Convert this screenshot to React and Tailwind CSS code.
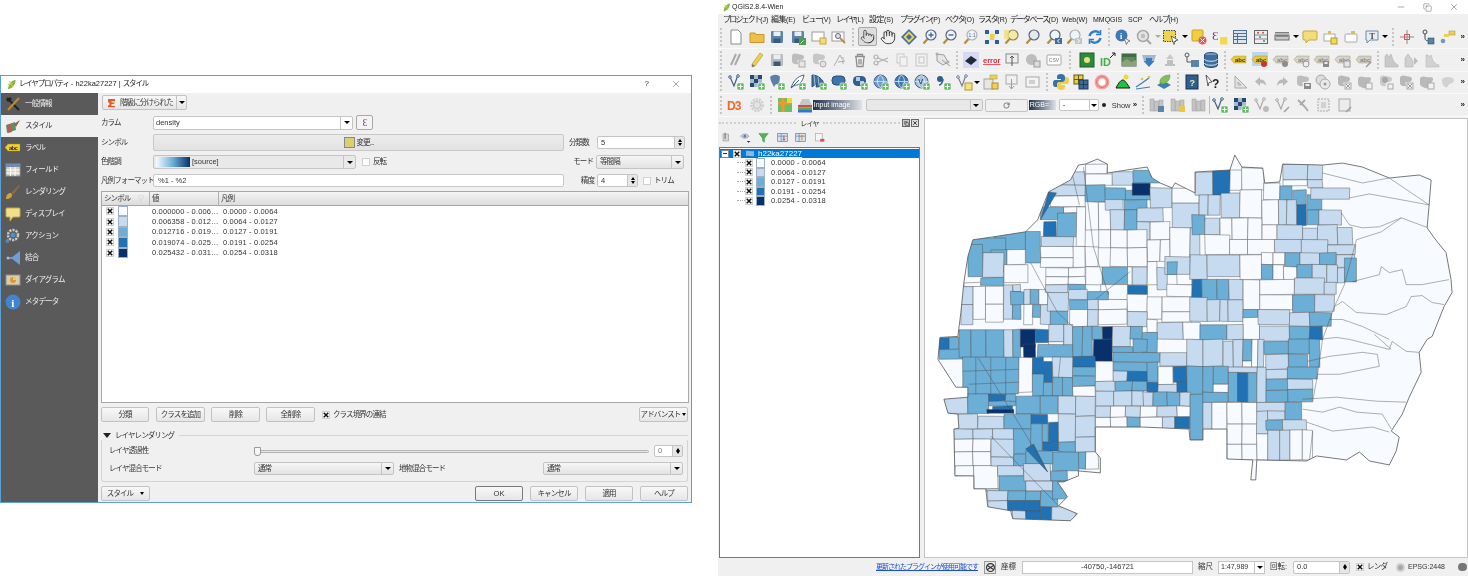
import { Hand, Minus, Copy, X, Pointer, RotateCw } from 'lucide-react';

const C = ['#f7fbff', '#c6dbef', '#6baed6', '#2171b5', '#08306b'];

// map outline, page coordinates
const OUTLINE = '1085,164 1097,159 1107,164 1107,173 1133,169 1147,167 1152,178 1160,183 1172,188 1175,183 1195,193 1195,172 1230,170 1235,155 1242,167 1263,168 1265,183 1280,182 1283,164 1323,165 1343,163 1363,167 1390,178 1420,175 1432,180 1430,205 1428,228 1435,238 1447,253 1452,280 1453,293 1445,307 1433,337 1428,340 1420,353 1422,373 1410,398 1403,415 1392,432 1400,438 1397,452 1390,466 1370,462 1360,453 1347,461 1317,457 1307,462 1257,461 1256,481 1251,481 1253,461 1227,460 1227,430 1203,430 1203,441 1190,441 1189,430 1143,428 1095,428 1095,453 1100,459 1100,474 1078,472 1078,477 1063,483 1057,483 1067,498 1058,507 1077,515 1070,522 1012,520 1010,512 987,508 985,490 973,490 973,477 954,477 953,430 958,429 957,415 947,414 943,400 967,398 967,388 955,388 937,360 939,338 957,337 960,313 963,283 967,257 972,240 993,237 1025,232 1037,220 1048,192 1070,180 1078,165';

// cells: x0, y0, x1, y1, class
const CELLS = [
  [1050, 172, 1085, 185, 1], [1085, 164, 1107, 174, 0], [1085, 174, 1112, 185, 0], [1112, 172, 1133, 185, 1], [1133, 170, 1160, 183, 2],
  [1048, 185, 1085, 196, 1], [1050, 196, 1085, 207, 0], [1063, 207, 1080, 213, 0], [1085, 185, 1105, 202, 2], [1105, 188, 1125, 200, 2], [1125, 190, 1152, 200, 2], [1132, 183, 1150, 195, 4],
  [1085, 202, 1098, 230, 0], [1098, 202, 1110, 230, 0], [1105, 200, 1123, 210, 1], [1124, 200, 1147, 210, 2], [1110, 210, 1124, 230, 1], [1124, 210, 1137, 230, 2],
  [1137, 208, 1163, 222, 1], [1150, 188, 1172, 208, 1], [1172, 188, 1199, 203, 0], [1172, 203, 1199, 228, 1], [1137, 222, 1150, 240, 1], [1150, 222, 1170, 240, 0],
  [1098, 230, 1110, 248, 0], [1110, 230, 1127, 248, 0], [1127, 230, 1147, 248, 0], [1147, 240, 1160, 262, 0], [1160, 240, 1170, 262, 0], [1170, 228, 1190, 262, 0], [1190, 228, 1200, 262, 1],
  [1040, 207, 1063, 220, 2], [1043, 222, 1056, 238, 3], [1057, 213, 1076, 237, 2], [1076, 207, 1085, 247, 0], [1041, 237, 1073, 247, 1], [1025, 232, 1040, 263, 2],
  [993, 232, 1025, 250, 2], [970, 238, 1005, 253, 2], [990, 250, 1006, 272, 2], [967, 245, 982, 277, 2], [982, 253, 1003, 278, 1], [980, 278, 1003, 286, 2], [1003, 265, 1027, 283, 0], [1006, 250, 1025, 265, 0],
  [1040, 247, 1073, 258, 0], [1040, 258, 1073, 268, 0], [1073, 247, 1085, 268, 0], [1085, 247, 1098, 267, 0], [1045, 268, 1068, 277, 0], [1068, 268, 1085, 277, 0], [1045, 277, 1068, 285, 0], [1068, 277, 1085, 285, 0], [1085, 267, 1102, 285, 0],
  [1102, 267, 1127, 285, 2], [1110, 248, 1127, 267, 0], [1127, 248, 1147, 267, 0], [1127, 267, 1132, 285, 0], [1132, 267, 1147, 285, 1], [1147, 262, 1157, 285, 0], [1157, 268, 1167, 290, 1], [1165, 257, 1190, 275, 1], [1167, 262, 1177, 275, 2], [1177, 275, 1192, 285, 0], [1167, 285, 1192, 297, 0],
  [1127, 286, 1147, 295, 3], [1100, 285, 1127, 300, 0], [1098, 300, 1127, 310, 0], [1127, 295, 1147, 312, 0], [1147, 297, 1162, 320, 0], [1162, 297, 1192, 312, 0], [1162, 312, 1192, 323, 0],
  [963, 283, 980, 287, 0], [960, 287, 972, 305, 1], [960, 305, 972, 325, 1], [972, 287, 985, 320, 0], [985, 287, 1003, 305, 0], [985, 305, 1003, 323, 0], [1003, 285, 1012, 320, 1], [1012, 285, 1020, 292, 1], [1012, 292, 1020, 320, 2],
  [1010, 292, 1023, 305, 2], [1023, 290, 1030, 305, 1], [1030, 290, 1038, 305, 2], [1038, 290, 1047, 305, 0], [1023, 305, 1032, 325, 0], [1032, 305, 1040, 318, 2], [1040, 305, 1050, 325, 1], [1045, 285, 1067, 293, 1], [1047, 293, 1068, 312, 1], [1050, 312, 1067, 327, 2],
  [1068, 285, 1085, 290, 2], [1068, 290, 1087, 300, 1], [1087, 292, 1108, 300, 2], [1069, 300, 1087, 310, 2], [1087, 300, 1098, 310, 1], [1069, 310, 1087, 327, 0], [1087, 310, 1098, 327, 1], [1098, 310, 1127, 325, 0], [1127, 312, 1147, 327, 1], [1147, 320, 1157, 333, 0], [1157, 323, 1183, 340, 1], [1183, 323, 1200, 340, 0],

  [1195, 172, 1213, 195, 1], [1213, 170, 1230, 195, 3], [1230, 170, 1242, 190, 0], [1242, 168, 1264, 190, 0], [1264, 183, 1280, 200, 0], [1199, 195, 1208, 215, 1], [1208, 195, 1220, 215, 1], [1221, 193, 1240, 218, 1], [1240, 190, 1262, 218, 0], [1262, 200, 1279, 225, 0],
  [1283, 164, 1308, 180, 1], [1308, 164, 1323, 180, 1], [1283, 180, 1308, 186, 0], [1308, 180, 1323, 188, 1], [1280, 186, 1292, 200, 2], [1293, 190, 1307, 205, 2], [1308, 195, 1322, 210, 2], [1311, 188, 1350, 199, 1],
  [1279, 200, 1287, 225, 1], [1287, 200, 1297, 225, 1], [1297, 205, 1307, 226, 3], [1307, 210, 1319, 225, 2], [1319, 210, 1342, 225, 1],
  [1192, 215, 1205, 235, 2], [1205, 218, 1220, 235, 1], [1220, 218, 1232, 240, 0], [1232, 218, 1248, 240, 0], [1248, 218, 1262, 240, 0], [1262, 225, 1277, 240, 0],
  [1277, 225, 1303, 240, 1], [1303, 228, 1318, 240, 1], [1318, 225, 1338, 245, 1], [1338, 228, 1353, 245, 1], [1275, 240, 1302, 253, 1], [1302, 240, 1328, 255, 1], [1328, 245, 1356, 255, 1],
  [1205, 235, 1230, 255, 0], [1230, 240, 1248, 255, 0], [1248, 240, 1275, 255, 0], [1190, 255, 1207, 280, 1], [1207, 255, 1240, 277, 1], [1240, 255, 1262, 280, 0], [1262, 253, 1273, 265, 0], [1273, 253, 1285, 265, 0],
  [1285, 253, 1300, 267, 2], [1300, 253, 1320, 265, 1], [1320, 253, 1337, 265, 2], [1337, 255, 1355, 268, 1], [1262, 265, 1273, 280, 2], [1273, 265, 1284, 280, 0], [1284, 267, 1297, 280, 0],
  [1297, 265, 1313, 283, 2], [1313, 265, 1327, 283, 1], [1327, 265, 1338, 283, 1], [1338, 268, 1345, 283, 1], [1345, 258, 1357, 282, 2],
  [1192, 280, 1202, 299, 3], [1202, 280, 1217, 300, 2], [1217, 280, 1229, 300, 2], [1229, 280, 1243, 300, 1], [1243, 280, 1260, 310, 0], [1260, 280, 1295, 295, 0], [1295, 278, 1325, 295, 1], [1325, 283, 1337, 295, 1],
  [1260, 295, 1293, 310, 0], [1293, 295, 1315, 313, 2], [1315, 295, 1335, 312, 1],
  [1190, 298, 1207, 322, 1], [1207, 300, 1220, 322, 1], [1220, 300, 1228, 322, 1], [1228, 300, 1243, 322, 1], [1243, 310, 1258, 318, 2], [1243, 318, 1260, 340, 0], [1258, 310, 1290, 325, 1], [1290, 313, 1310, 327, 1], [1310, 313, 1332, 327, 2],
  [1200, 325, 1227, 340, 2], [1227, 325, 1243, 340, 1], [1260, 327, 1290, 342, 1], [1290, 327, 1310, 340, 2], [1310, 327, 1323, 340, 3],

  [938, 338, 948, 350, 3], [948, 338, 958, 350, 2], [938, 350, 963, 360, 2], [958, 330, 970, 358, 2], [970, 330, 985, 358, 2], [985, 330, 1003, 358, 2], [1003, 330, 1012, 358, 1], [1012, 330, 1020, 358, 2],
  [1020, 330, 1035, 348, 4], [1023, 345, 1035, 358, 4], [1035, 330, 1048, 343, 3], [1048, 325, 1063, 342, 1], [1048, 342, 1063, 352, 0], [1063, 325, 1072, 352, 1], [1072, 327, 1082, 358, 2], [1082, 327, 1092, 358, 2], [1037, 345, 1072, 358, 2],
  [1092, 327, 1102, 340, 2], [1102, 327, 1112, 340, 4], [1093, 340, 1112, 362, 4], [1112, 327, 1130, 347, 1], [1130, 327, 1142, 340, 2], [1142, 333, 1157, 353, 2], [1112, 347, 1133, 353, 2], [1133, 340, 1147, 353, 2],
  [1072, 357, 1095, 368, 3], [1072, 368, 1095, 377, 2], [1072, 377, 1095, 387, 2], [1072, 387, 1095, 397, 0], [1095, 362, 1113, 382, 0], [1095, 382, 1115, 392, 1], [1115, 382, 1132, 392, 2], [1132, 382, 1147, 392, 2], [1147, 383, 1158, 393, 3],
  [1113, 353, 1160, 363, 2], [1113, 363, 1147, 372, 2], [1113, 372, 1127, 382, 1], [1127, 372, 1147, 382, 3], [1147, 363, 1158, 382, 2], [1158, 367, 1173, 385, 0], [1158, 385, 1177, 393, 1], [1173, 367, 1187, 383, 3], [1177, 383, 1188, 393, 3], [1160, 353, 1187, 367, 1], [1187, 340, 1203, 367, 1], [1187, 367, 1203, 395, 2],
  [1095, 392, 1113, 407, 1], [1113, 392, 1132, 407, 1], [1132, 392, 1143, 407, 1], [1143, 393, 1153, 407, 1], [1153, 393, 1167, 407, 2], [1167, 393, 1180, 407, 2], [1180, 393, 1190, 407, 1], [1190, 395, 1203, 441, 2],
  [1095, 407, 1110, 418, 1], [1110, 407, 1125, 418, 0], [1125, 407, 1140, 418, 1], [1140, 407, 1157, 418, 0], [1157, 407, 1177, 418, 1], [1177, 407, 1190, 418, 0],
  [1095, 418, 1110, 428, 0], [1110, 418, 1127, 428, 0], [1127, 418, 1140, 428, 2], [1140, 418, 1162, 430, 0], [1162, 418, 1175, 430, 1], [1175, 418, 1190, 430, 3],

  [962, 358, 1018, 395, 2], [1018, 358, 1032, 393, 0], [1032, 358, 1043, 375, 3], [1043, 362, 1052, 383, 3], [1032, 375, 1043, 397, 2], [1052, 358, 1072, 378, 1], [1052, 378, 1072, 397, 2], [1043, 383, 1052, 397, 2],
  [943, 395, 967, 414, 1], [967, 395, 988, 414, 2], [988, 395, 1005, 402, 3], [988, 402, 1015, 407, 2], [992, 407, 1012, 412, 3], [986, 410, 1013, 414, 4], [1005, 395, 1015, 402, 2],
  [1015, 397, 1040, 415, 2], [1040, 397, 1058, 415, 2], [1058, 397, 1075, 415, 1], [1075, 397, 1095, 417, 1],
  [1030, 415, 1047, 425, 3], [1048, 423, 1058, 443, 3], [1042, 443, 1058, 452, 3], [1058, 415, 1075, 443, 1], [1075, 417, 1095, 438, 1], [1075, 438, 1095, 453, 1], [1085, 453, 1098, 470, 0], [1078, 453, 1085, 470, 2], [1058, 443, 1075, 453, 2], [1052, 453, 1078, 472, 2], [1030, 425, 1042, 452, 2], [1042, 425, 1048, 443, 2],
  [957, 415, 977, 430, 1], [977, 417, 1003, 430, 1], [1003, 415, 1030, 430, 2], [953, 430, 972, 440, 1], [972, 430, 992, 440, 1], [992, 430, 1013, 440, 1], [1013, 430, 1030, 455, 2],
  [953, 440, 972, 453, 0], [972, 440, 990, 453, 0], [953, 453, 972, 467, 0], [972, 453, 990, 467, 0], [954, 467, 973, 477, 0], [973, 467, 997, 490, 0], [990, 440, 1013, 458, 1], [990, 458, 1013, 467, 1], [1013, 455, 1025, 475, 2], [1025, 452, 1052, 465, 2],
  [997, 467, 1023, 477, 1], [998, 477, 1025, 492, 2], [1023, 465, 1050, 482, 1], [1050, 472, 1067, 482, 2], [985, 490, 998, 492, 1], [987, 492, 1007, 502, 1], [987, 502, 1007, 512, 1], [1007, 492, 1025, 502, 2], [1025, 492, 1040, 502, 2], [1025, 482, 1052, 492, 1],
  [1007, 502, 1025, 512, 3], [1025, 502, 1040, 512, 3], [1012, 512, 1025, 522, 1], [1025, 512, 1040, 522, 3], [1040, 508, 1051, 522, 3], [1051, 508, 1075, 522, 1], [1040, 492, 1057, 508, 2], [1052, 482, 1068, 500, 2],

  [1233, 340, 1243, 368, 1], [1223, 342, 1233, 368, 1], [1243, 340, 1252, 362, 2], [1252, 340, 1258, 368, 0], [1258, 340, 1264, 368, 1], [1243, 362, 1252, 368, 0],
  [1264, 342, 1289, 355, 2], [1266, 355, 1289, 370, 1], [1289, 340, 1310, 355, 2], [1289, 355, 1308, 368, 2], [1310, 340, 1320, 368, 2], [1203, 340, 1223, 367, 1],
  [1266, 370, 1288, 380, 1], [1266, 380, 1288, 391, 2], [1266, 391, 1288, 403, 2], [1288, 368, 1318, 380, 2], [1288, 380, 1313, 390, 1], [1288, 390, 1313, 403, 2],
  [1228, 373, 1238, 403, 2], [1238, 373, 1248, 403, 3], [1248, 373, 1257, 403, 2], [1257, 368, 1266, 403, 1], [1228, 368, 1257, 373, 1], [1213, 367, 1228, 385, 2], [1213, 385, 1228, 393, 0], [1203, 393, 1228, 403, 2], [1203, 367, 1213, 393, 2],
  [1203, 403, 1212, 430, 1], [1212, 403, 1227, 430, 0], [1227, 403, 1242, 425, 0], [1242, 403, 1257, 425, 0], [1227, 425, 1242, 445, 0], [1242, 425, 1257, 445, 0], [1227, 445, 1242, 461, 0], [1242, 445, 1257, 461, 0],
  [1257, 403, 1287, 412, 1], [1268, 412, 1285, 421, 1], [1285, 403, 1302, 421, 2], [1257, 412, 1268, 435, 1], [1266, 421, 1283, 431, 2], [1283, 421, 1307, 431, 1], [1257, 435, 1268, 461, 0], [1268, 431, 1280, 461, 1], [1280, 431, 1290, 461, 1], [1290, 431, 1303, 461, 0], [1303, 431, 1313, 461, 0],
];

// roads and the big eastern blocks: only lines
const LINES = [
  '1083,167 1093,247 1108,295', '1072,175 1079,205', '1030,263 1057,313 1072,327', '977,358 1023,432 1047,473', '990,437 1058,507', '1095,300 1130,272',
  '975,358 975,395', '990,358 990,395', '1005,358 1005,395', '962,372 1018,370', '968,385 1018,383', '1062,378 1062,397', '1060,358 1058,378',
  '1323,173 1363,183 1390,178 1430,205', '1350,198 1370,194 1430,205', '1342,213 1350,225 1363,228 1380,227 1402,218 1429,228', '1357,240 1382,232 1402,218',
  '1353,282 1380,275 1382,267 1390,273 1403,270 1407,285 1423,285 1450,280', '1335,307 1343,302 1357,313 1387,315 1407,307 1412,297 1423,296 1433,303 1445,305',
  '1330,320 1343,320 1363,327 1390,340', '1320,340 1337,338 1350,340 1390,350 1393,342 1407,352 1420,353', '1375,335 1392,350',
  '1308,362 1330,357 1363,353 1378,355 1380,367 1340,375 1318,375', '1303,400 1337,398 1377,402 1407,403', '1303,410 1323,413 1340,408 1357,413 1383,415 1392,430',
  '1307,423 1333,432 1373,428 1390,433', '1313,432 1310,461', '1357,240 1345,285 1335,307 1323,340 1318,375 1313,403',
];

const jit = (x, y) => [x + (((x * 7 + y * 13) % 3) - 1) * 0.3, y + (((x * 11 + y * 5) % 3) - 1) * 0.3];

function ChoroplethMap() {
  return (
    <svg viewBox="924 119 544 439" className="w-full h-full block">
      <defs>
        <clipPath id="outline"><polygon points={OUTLINE} /></clipPath>
      </defs>
      <polygon points={OUTLINE} fill={C[0]} />
      <g clipPath="url(#outline)" stroke="#505050" strokeWidth="0.6" strokeOpacity="0.75">
        {CELLS.map(([x0, y0, x1, y1, c], i) => {
          const pts = [jit(x0, y0), jit(x1, y0), jit(x1, y1), jit(x0, y1)].map((p) => p.join(',')).join(' ');
          return <polygon key={i} points={pts} fill={C[c]} />;
        })}
        <polygon points="1025,450 1033,445 1047,473" fill={C[3]} />
        <polygon points="1048,192 1056,193 1040,220" fill={C[3]} />
        {LINES.map((l, i) => <polyline key={i} points={l} fill="none" />)}
      </g>
      <polygon points={OUTLINE} fill="none" stroke="#555" strokeWidth="0.8" />
    </svg>
  );
}

const Plus = () => (
  <g>
    <rect x="9" y="9" width="7" height="7" rx="1" fill="#5fb85f" stroke="#fff" strokeWidth="0.6" />
    <path d="M12.5 10.3v4.4M10.3 12.5h4.4" stroke="#fff" strokeWidth="1.2" />
  </g>
);
const Mag = ({ lens = '#eef4fb', ring = '#56657a', children }) => (
  <g>
    <path d="M5.5 10 1.5 14.5" stroke="#b88a3c" strokeWidth="2.2" />
    <circle cx="9" cy="6" r="5" fill={lens} stroke={ring} strokeWidth="1.2" />
    {children}
  </g>
);
const Floppy = ({ f = '#5b84ad' }) => (
  <g>
    <rect x="2" y="2" width="12" height="12" rx="1" fill={f} />
    <rect x="4.5" y="2.5" width="7" height="4.5" fill="#e8eef4" />
    <rect x="4.5" y="9.5" width="7" height="4.5" fill="#3c5a78" />
  </g>
);
const Blob = ({ f = '#bdbdbd' }) => <path d="M2 4c0-3 4-3 6-2s6 0 6 3-3 3-5 3-2 1-1 3-6 2-6-2 0-3 0-5z" fill={f} />;
const Globe = ({ f = '#6f9cc9' }) => (
  <g>
    <circle cx="7.5" cy="7.5" r="6.5" fill={f} stroke="#41648a" />
    <path d="M1 7.5h13M7.5 1c-4 4-4 9 0 13M7.5 1c4 4 4 9 0 13" stroke="#dfe9f3" strokeWidth="0.8" fill="none" />
  </g>
);
const Vee = ({ s = '#3e5f7f' }) => (
  <g>
    <path d="M2 3l4 9 4-11" stroke={s} strokeWidth="1.2" fill="none" />
    <circle cx="2" cy="3" r="1.3" fill="#fff" stroke={s} /><circle cx="10" cy="2" r="1.3" fill="#fff" stroke={s} />
  </g>
);
const Books = () => (
  <g fill="#c4c4c4" stroke="#9a9a9a" strokeWidth="0.5">
    <rect x="1" y="2" width="4" height="12" /><rect x="5.5" y="4" width="4" height="10" /><rect x="10" y="3" width="4" height="11" />
  </g>
);
const Abc = ({ f = '#e6c840', tc = '#333' }) => (
  <g>
    <path d="M3 4h12v7H3L0 7.5z" fill={f} stroke="#9a8a2a" strokeWidth="0.4" />
    <text x="4" y="10" fontSize="6" fontWeight="700" fill={tc} fontFamily="Liberation Sans">abc</text>
  </g>
);
const GreyBadge = ({ f = '#8d8d8d' }) => <circle cx="12" cy="12" r="3" fill={f} />;

const I = {
  page: <path d="M3 1h7l3 3v11H3z" fill="#fff" stroke="#8a8a8a" />,
  folder: <path d="M1 4h5l1 1.5h8v8H1z" fill="#eebf4a" stroke="#c8962a" />,
  save: <Floppy />,
  saveas: <g><Floppy /><rect x="9" y="9" width="7" height="7" fill="#4e9e4e" /><path d="M10.5 14.5l3-3" stroke="#fff" /></g>,
  newc: <g><rect x="1" y="3" width="12" height="9" fill="#fff" stroke="#9a9a9a" /><rect x="9" y="9" width="6" height="6" fill="#f4dc7c" stroke="#c8a63c" /></g>,
  compm: <g><rect x="1" y="3" width="12" height="9" fill="#fff" stroke="#9a9a9a" /><circle cx="7" cy="7" r="2.5" fill="#dde" stroke="#667" /><path d="M9 9l5 5" stroke="#b88a3c" strokeWidth="1.8" /></g>,
  panSel: <g><path d="M8 0l8 8-8 8-8-8z" fill="#3f6fa8" /><rect x="4" y="4" width="8" height="8" fill="#efd34f" transform="rotate(45 8 8)" /><path d="M8 5l3 3-3 3-3-3z" fill="#3f6fa8" /></g>,
  zin: <Mag><path d="M9 3.5v5M6.5 6h5" stroke="#3d6ea5" strokeWidth="1.4" /></Mag>,
  zout: <Mag><path d="M6.5 6h5" stroke="#3d6ea5" strokeWidth="1.4" /></Mag>,
  z11: <Mag ring="#aab2bc"><text x="5.5" y="8" fontSize="5" fill="#667" fontFamily="Liberation Sans">1:1</text></Mag>,
  zfull: <g><rect x="2" y="2" width="12" height="12" fill="#e4ecf4" /><path d="M1 1h4v4H1zM11 1h4v4h-4zM1 11h4v4H1zM11 11h4v4h-4z" fill="#2f5f96" /><path d="M6 5h5l-1 6H6z" fill="#e8cf4e" /></g>,
  zsel: <Mag lens="#f6e9a4" ring="#8c8457"><rect x="0" y="1" width="5" height="9" fill="#efdf7c" fillOpacity="0.8" /></Mag>,
  zlayer: <Mag lens="#e4e9ee" />,
  zlast: <Mag><rect x="9" y="9" width="7" height="6" fill="#3e6e9e" /><path d="M13.5 10l-2 2 2 2" stroke="#fff" fill="none" /></Mag>,
  znext: <Mag ring="#a6adb5"><rect x="9" y="9" width="7" height="6" fill="#c0c6cc" /><path d="M11.5 10l2 2-2 2" stroke="#fff" fill="none" /></Mag>,
  refresh: <g fill="none" stroke="#2f7fc4" strokeWidth="2.4"><path d="M2.5 7a6 6 0 0 1 10-3" /><path d="M13.5 9a6 6 0 0 1-10 3" /><path d="M13.5 1v4.5H9M2.5 15v-4.5H7" strokeWidth="1.6" /></g>,
  ident: <g><circle cx="6.5" cy="6.5" r="6" fill="#3f79b5" /><text x="5" y="10" fontSize="8" fontWeight="700" fill="#fff" fontFamily="Liberation Serif">i</text><path d="M9 9l6 3-2.5 1-1 2.5z" fill="#fff" stroke="#555" strokeWidth="0.7" /></g>,
  gmag: <g><circle cx="7" cy="7" r="5.5" fill="#e4e4e4" stroke="#a6a6a6" strokeWidth="1.5" /><circle cx="7" cy="7" r="2.2" fill="#bdbdbd" /><path d="M11 11l4 4" stroke="#a6a6a6" strokeWidth="2" /></g>,
  select: <g><rect x="0.5" y="1.5" width="12" height="11" fill="#efd34f" stroke="#444" strokeDasharray="1.5 1" /><path d="M8 7l7 4-3 1-1 3.5z" fill="#fff" stroke="#333" strokeWidth="0.7" /></g>,
  deselect: <g><rect x="1" y="1" width="11" height="11" rx="1" fill="#f0cf3e" stroke="#c8a423" /><circle cx="11.5" cy="11.5" r="4" fill="#e25c5c" /><path d="M9.5 9.5l4 4M13.5 9.5l-4 4" stroke="#fff" /></g>,
  expr: <g><text x="0" y="11" fontSize="13" fill="#7a3f8f" fontFamily="Liberation Serif">Ɛ</text><rect x="8" y="8" width="7.5" height="7.5" rx="1" fill="#f3d94e" /></g>,
  table: <g><rect x="1.5" y="1.5" width="13" height="13" fill="#dbe5ef" stroke="#51708f" /><path d="M1.5 4.5h13M1.5 7.5h13M1.5 10.5h13M5.5 4.5v10" stroke="#51708f" /></g>,
  calc: <g><rect x="1.5" y="1.5" width="13" height="13" fill="#eee" stroke="#666" /><path d="M2 6h12M2 10h12" stroke="#888" /><circle cx="5" cy="3.8" r="1" fill="#d44" /><circle cx="10" cy="3.8" r="1" fill="#d44" /><circle cx="7" cy="8" r="1" fill="#39a" /><circle cx="11" cy="12" r="1" fill="#395" /></g>,
  ruler: <g><rect x="1" y="6" width="14" height="5" fill="#c9c9c9" stroke="#6e6e6e" /><path d="M3 6v2M5 6v2M7 6v2M9 6v2M11 6v2M13 6v2" stroke="#555" /><rect x="1" y="3" width="14" height="1.5" fill="#7e7e7e" /></g>,
  tip: <path d="M2 2h12a1 1 0 0 1 1 1v7a1 1 0 0 1-1 1H7l-3 3v-3H2a1 1 0 0 1-1-1V3a1 1 0 0 1 1-1z" fill="#f3dd76" stroke="#c5a93b" />,
  annoA: <g><rect x="2" y="5" width="11" height="7" fill="#fff" stroke="#aaa" /><rect x="9" y="9" width="6" height="6" fill="#f3d94e" stroke="#b6962c" /><rect x="6" y="2" width="3" height="3" fill="#e0c24a" /></g>,
  annoB: <g><rect x="2" y="5" width="12" height="8" rx="1" fill="#fff" stroke="#aaa" /><rect x="8" y="2" width="4" height="3" fill="#e0c24a" /></g>,
  tbox: <g><path d="M2 2h12v9H6l-3 3v-3H2z" fill="#e6edf3" stroke="#6f8ba5" /><text x="5.5" y="9.5" fontSize="8" fontWeight="700" fill="#444" fontFamily="Liberation Serif">T</text></g>,
  cross: <g stroke="#8a8a8a"><path d="M8 1v14M1 8h14" /><rect x="5.5" y="5.5" width="5" height="5" fill="none" stroke="#d45656" /></g>,
  node: <g><circle cx="6" cy="3" r="2" fill="none" stroke="#445" /><path d="M6 5v4c0 3 3 3 5 3" stroke="#445" fill="none" /><rect x="9" y="9" width="6" height="6" fill="#5585a8" stroke="#334" strokeWidth="0.5" /></g>,
  nodes: <g><rect x="9" y="2" width="6" height="4" fill="#ead05a" stroke="#a98f2e" strokeWidth="0.5" /><rect x="4" y="5" width="5" height="3" fill="#ead05a" /><circle cx="3" cy="12" r="2.3" fill="#6a9cc4" /></g>,
  gpencil: <g stroke="#a9a9a9" strokeWidth="2" fill="none"><path d="M3 13l5-11" /><path d="M7 13l5-11" /></g>,
  pencil: <g><path d="M3 12L11 1l3 2-8 11-3 1z" fill="#eed04e" stroke="#a98f2e" strokeWidth="0.6" /><path d="M3 12l3 2-3 1z" fill="#777" /></g>,
  gsave: <Floppy f="#bcbcbc" />,
  gblobA: <g><Blob /><rect x="9" y="9" width="6" height="6" fill="#e6e6e6" stroke="#aaa" /></g>,
  gblobB: <g><Blob f="#c6c6c6" /><circle cx="12" cy="12" r="3" fill="#e3e3e3" stroke="#aaa" /></g>,
  gnode: <g stroke="#acacac" fill="none"><path d="M3 14L9 3l2 4" /><path d="M7 10l7-1M12 5v7" /></g>,
  trash: <g fill="none" stroke="#8e8e8e" strokeWidth="1.3"><path d="M3 4.5h10M5.5 4.5V2.5h5v2M4 5l1 9.5h6L12 5M7 7v5.5M9 7v5.5" /></g>,
  scis: <g stroke="#aeaeae" fill="none" strokeWidth="1.2"><circle cx="3" cy="5" r="2" /><circle cx="3" cy="11" r="2" /><path d="M5 6l10 4M5 10l10-4" /></g>,
  gcopy: <g fill="#f2f2f2" stroke="#c9c9c9"><rect x="3" y="2" width="7" height="9" /><rect x="6" y="5" width="7" height="9" /></g>,
  gpaste: <g fill="#f2f2f2" stroke="#c4c4c4"><rect x="2" y="2" width="11" height="12" /><rect x="5" y="5" width="5" height="6" /></g>,
  gmove: <g stroke="#9c9c9c" fill="#e6e6e6"><path d="M2 2l7 1 4 7-5 3-6-4z" /><circle cx="2" cy="2" r="1" /><circle cx="13" cy="10" r="1" /><path d="M7 8l8 6" /></g>,
  chip: <g><rect width="16" height="16" fill="#d7d7f6" /><path d="M2 9l6-5 6 4-6 5z" fill="#1f2937" /></g>,
  err: <text x="-1" y="11" fontSize="7.5" fontWeight="700" fill="#d92a3a" textDecoration="underline" fontFamily="Liberation Sans">error</text>,
  upl: <g><rect x="2" y="2" width="12" height="9" fill="#eee" stroke="#888" /><path d="M8 4v10M6 6l2-2 2 2" stroke="#555" fill="none" /></g>,
  gglobe: <g><circle cx="6.5" cy="7.5" r="5.5" fill="#bdbdbd" /><rect x="9" y="9" width="6" height="6" fill="#dcdcdc" stroke="#999" /></g>,
  csv: <g><rect x="1" y="3" width="14" height="10" rx="1" fill="#fff" stroke="#a5a5a5" /><text x="2.8" y="10" fontSize="5" fill="#777" fontFamily="Liberation Sans">CSV</text></g>,
  grnbox: <g><rect x="1" y="1" width="14" height="14" fill="#2d8a3a" stroke="#1d5c24" /><circle cx="8" cy="8" r="3" fill="#e9e27a" /></g>,
  grnid: <g><text x="0" y="14" fontSize="11" fontWeight="700" fill="#3fb13f" fontFamily="Liberation Sans">ID</text><path d="M10 6l5-5M12 1h3v3" stroke="#222" fill="none" /></g>,
  land: <g><rect x="1" y="2" width="14" height="12" fill="#5e8a60" stroke="#3f5f41" /><rect x="1" y="2" width="14" height="3" fill="#3f6d43" /><path d="M1 10l5-3 4 3 5-2v6H1z" fill="#8aa276" /></g>,
  down: <g><path d="M1 3h14l-2 6H3z" fill="#a5b8cb" /><path d="M5 6h6v3h2.5L8 15 2.5 9H5z" fill="#3b7cbc" /></g>,
  gup: <g><path d="M5 8h6v4h2v2H3v-2h2z" fill="#bfbfbf" /><path d="M8 2l4 5H4z" fill="#c9c9c9" /></g>,
  dblink: <g><circle cx="4" cy="3" r="2" fill="none" stroke="#556" /><path d="M4 5v5h4" stroke="#556" fill="none" /><rect x="8" y="8" width="8" height="7" fill="#5b85a8" /></g>,
  db: <g><ellipse cx="8" cy="3" rx="6.5" ry="2.5" fill="#6f9cc4" stroke="#26507a" /><path d="M1.5 3v10c0 3.3 13 3.3 13 0V3" fill="#3e6f9d" stroke="#26507a" /><path d="M1.5 7c0 3 13 3 13 0M1.5 11c0 3 13 3 13 0" fill="none" stroke="#d7e4ef" /></g>,
  abc: <Abc />,
  abcsel: <g><rect width="16" height="14" fill="#bcd6ef" /><Abc /><circle cx="12" cy="12" r="3" fill="#c8352e" /></g>,
  gabc1: <g><Abc f="#d0d0d0" tc="#888" /><GreyBadge /></g>,
  gabc2: <g><Abc f="#d4d4d4" tc="#888" /><circle cx="12" cy="12" r="3" fill="#eee" stroke="#999" /></g>,
  gabc3: <g><Abc f="#d0d0d0" tc="#888" /><rect x="9" y="9" width="6" height="6" fill="#8a8a8a" /><rect x="10.5" y="10" width="3" height="2" fill="#eee" /></g>,
  gabc4: <g><Abc f="#d4d4d4" tc="#888" /><rect x="9" y="9" width="6" height="6" fill="#e6e6e6" stroke="#999" /></g>,
  gabc5: <g><Abc f="#d0d0d0" tc="#888" /><path d="M10 15l5-5" stroke="#9a9a9a" strokeWidth="1.5" /></g>,
  gch1: <path d="M1 15V4l2-2 2 3 2-3 2 6 2 3 3 2v2z" fill="#c9c9c9" stroke="#aaa" strokeWidth="0.5" />,
  gch2: <g><path d="M1 15V6l3-4 3 4 2 3v6z" fill="#cfcfcf" stroke="#aaa" strokeWidth="0.5" /><path d="M10 5l4 4-4 4z" fill="#bbb" /></g>,
  gch3: <path d="M1 15V3h2l1 2 2-2 2 6 3 3 3 1v2z" fill="#d2d2d2" stroke="#b0b0b0" strokeWidth="0.5" />,
  addV: <g><Vee /><Plus /></g>,
  addR: <g><path d="M1 1h4v4H1zM9 1h4v4H9zM5 5h4v4H5zM1 9h4v4H1z" fill="#28486f" /><path d="M5 1h4v4H5zM1 5h4v4H1zM9 5h4v4H9zM5 9h4v4H5z" fill="#a3bad2" /><Plus /></g>,
  addEle: <g><path d="M1 3c3-3 8-3 10 0l-1 8-3-1-2 3-3-6z" fill="#5b7fa5" /><Plus /></g>,
  addFeat: <g><path d="M1 14C3 7 8 2 14 1c-1 6-5 11-9 10z" fill="#fff" stroke="#41648a" /><path d="M1 14l8-8" stroke="#41648a" /><Plus /></g>,
  addWing: <g><path d="M1 1c6 0 11 4 13 11l-9 1 1-4-5 4z" fill="#3e6f9d" stroke="#26507a" /><path d="M3 1l1 10M7 3l1 8" stroke="#cfdcea" strokeWidth="0.7" /><Plus /></g>,
  addRnd: <g><rect x="1" y="2" width="13" height="9" rx="4" fill="#3f75ad" stroke="#26507a" /><Plus /></g>,
  addChk: <g><rect x="1" y="2" width="13" height="10" rx="4.5" fill="#2f5f8f" /><path d="M4 3h4v4H4zM8 7h4v4H8z" fill="#b7c9db" /><Plus /></g>,
  addG1: <g><Globe /><Plus /></g>,
  addG2: <g><Globe f="#3e78b5" /><Plus /></g>,
  addG3: <g><Globe f="#a6c0da" /><text x="4" y="10" fontSize="8" fontWeight="700" fill="#2f5f8f" fontFamily="Liberation Sans">V</text><Plus /></g>,
  addCm: <g><circle cx="5" cy="5" r="3" fill="#2f5f8f" /><path d="M8 5c0 3-2 6-4 6" stroke="#2f5f8f" strokeWidth="1.6" fill="none" /><Plus /></g>,
  addVY: <g><Vee s="#6e7f8f" /><rect x="9" y="9" width="7" height="7" fill="#f3e27f" stroke="#b8962c" /></g>,
  comp: <g><rect x="1" y="5" width="9" height="10" fill="#e6e6e6" stroke="#a5a5a5" /><rect x="7" y="1" width="7" height="4" fill="#edd25c" stroke="#a98f2e" strokeWidth="0.5" /><rect x="9" y="9" width="6" height="6" fill="#edd25c" stroke="#a98f2e" /></g>,
  gupl: <g><rect x="2" y="1" width="11" height="9" fill="#f0f0f0" stroke="#a9a9a9" /><path d="M7.5 5v10M5 12l2.5 3 2.5-3" stroke="#9c9c9c" fill="none" /></g>,
  gbox: <g><rect x="1" y="3" width="13" height="10" fill="#f4f4f4" stroke="#a8a8a8" /><rect x="4" y="6" width="6" height="4" fill="#cfcfcf" /></g>,
  py: <g><path d="M8 0c-3 0-4 1-4 3v2h4v1H2C0 6 0 9 0 10c0 2 1 3 2 3h2v-2c0-2 1-3 3-3h3c1 0 2-1 2-2V3c0-2-2-3-4-3z" fill="#3572a5" /><path d="M8 16c3 0 4-1 4-3v-2H8v-1h6c2 0 2-3 2-4 0-2-1-3-2-3h-2v2c0 2-1 3-3 3H6C5 8 4 9 4 10v3c0 2 2 3 4 3z" fill="#f0cd4a" /></g>,
  grid2: <g><rect x="1" y="1" width="9" height="9" fill="#f0cf32" stroke="#5a5a1a" /><path d="M5.5 1v9M1 5.5h9" stroke="#5a5a1a" /><rect x="6" y="6" width="9" height="9" fill="#3b6a96" stroke="#1f3f5f" /><path d="M10.5 6v9M6 10.5h9" stroke="#1f3f5f" /></g>,
  pink: <g><circle cx="8" cy="8" r="7.5" fill="#f5a3a3" /><circle cx="8" cy="8" r="3.5" fill="#fff" /><circle cx="8" cy="8" r="5.5" fill="none" stroke="#f06a6a" /></g>,
  hill: <g><path d="M1 14c3-6 5-8 7-8s4 4 7 8z" fill="#1fc23e" stroke="#1a1a1a" /><circle cx="11" cy="3" r="2.5" fill="#f0d83c" /></g>,
  lnode: <g><path d="M1 13l6-4 7-5" stroke="#3e7bb8" strokeWidth="1.3" fill="none" /><path d="M1 15l14-2" stroke="#3e7bb8" /><circle cx="7" cy="5" r="1.3" fill="#e2c63c" /><circle cx="14" cy="3" r="1.3" fill="#e2c63c" /></g>,
  leaf: <g><path d="M1 11l7 4 7-4-7-4z" fill="#3d80a8" /><path d="M4 9C3 4 8 1 14 1c0 6-4 9-8 9z" fill="#83bf5d" stroke="#4a8a39" strokeWidth="0.5" /></g>,
  book: <g><rect x="2" y="1" width="12" height="14" fill="#2e5f8f" stroke="#17334f" /><text x="5.5" y="11.5" fontSize="9" fontWeight="700" fill="#f2e9b0" fontFamily="Liberation Sans">?</text></g>,
  what: <g><path d="M1 1l6 7-3 .5-1 3.5z" fill="#fff" stroke="#333" strokeWidth="0.8" /><text x="7" y="14" fontSize="12" fontWeight="700" fill="#222" fontFamily="Liberation Sans">?</text></g>,
  gtri: <g><path d="M2 14V2l12 12z" fill="#e2e2e2" stroke="#aaa" /><path d="M5 11V8l3 3z" fill="#f0f0f0" stroke="#aaa" /></g>,
  undo: <path d="M7 3L2 7.5 7 12V9c3 0 5 1 6 3 0-4-2-6.5-6-6.5z" fill="#b9b9b9" />,
  redo: <path d="M9 3l5 4.5L9 12V9c-3 0-5 1-6 3 0-4 2-6.5 6-6.5z" fill="#b9b9b9" />,
  bl1: <g><Blob /><rect x="9" y="9" width="7" height="6" fill="#8a8a8a" /><rect x="10.5" y="10" width="4" height="2" fill="#eee" /></g>,
  bl2: <g><circle cx="6" cy="6" r="5" fill="#dcdcdc" stroke="#a9a9a9" /><circle cx="10" cy="10" r="5" fill="#eaeaea" stroke="#a9a9a9" /><circle cx="10" cy="10" r="1.5" fill="#999" /></g>,
  bl3: <g><Blob f="#b8b8b8" /><rect x="9" y="9" width="6" height="6" fill="#f2f2f2" stroke="#a9a9a9" /><path d="M10 10l4 4M14 10l-4 4" stroke="#999" /></g>,
  bl4: <g><path d="M1 5c0-3 4-3 6-2s7-1 7 2-3 4-3 6-3 4-5 3-5-2-5-4 0-3 0-5z" fill="#b9b9b9" /><rect x="9" y="9" width="6" height="6" fill="#f2f2f2" stroke="#a9a9a9" /></g>,
  bl5: <g><Blob f="#cacaca" /><circle cx="7" cy="6" r="3" fill="#a7a7a7" /><rect x="10" y="10" width="5" height="5" fill="#f2f2f2" stroke="#a9a9a9" /></g>,
  bl6: <g><path d="M2 6c0-4 12-4 12 0s-5 3-6 6-6 1-6-6z" fill="#d2d2d2" /></g>,
  d3: <text x="-1" y="13" fontSize="12" fontWeight="700" letterSpacing="-1" fill="#f2652b" fontFamily="Liberation Sans">D3</text>,
  gear: <g><circle cx="8" cy="8" r="5.5" fill="none" stroke="#cfcfcf" strokeWidth="3" strokeDasharray="2 1" /><circle cx="8" cy="8" r="3.5" fill="#e4e4e4" stroke="#c4c4c4" /></g>,
  gridO: <g><rect x="1" y="1" width="14" height="14" fill="#6bbf6b" /><path d="M1 6h14M6 1v14" stroke="#f09a2c" strokeWidth="3" /><path d="M10 1h5v5h-5z" fill="#f0d83c" /></g>,
  strip: <g><path d="M2 8l3-6h7l3 6z" fill="#c7c7c7" /><rect x="1" y="8" width="14" height="2.5" fill="#d84a4a" /><rect x="1" y="10.5" width="14" height="2.5" fill="#4bb04b" /><rect x="1" y="13" width="14" height="2.5" fill="#3f6fd0" /></g>,
  lib1: <g><Books /><rect x="9" y="9" width="6" height="6" fill="#5b85a8" /></g>,
  lib2: <g><Books /><rect x="9" y="9" width="6" height="6" fill="#e8c940" /></g>,
  lib3: <Books />,
  gvv: <g><Vee s="#a9a9a9" /><GreyBadge f="#bbb" /></g>,
  gvp: <g><Vee s="#a9a9a9" /><path d="M9 15l5-5" stroke="#a0a0a0" strokeWidth="1.6" /></g>,
  gtool: <g stroke="#a9a9a9" strokeWidth="1.8" fill="none"><path d="M3 3l7 7M10 3l-5 5M10 10l3 4" /></g>,
  gpg1: <g><rect x="2" y="2" width="11" height="12" fill="#ececec" stroke="#aaa" strokeDasharray="2 1" /><rect x="5" y="5" width="5" height="6" fill="#d2d2d2" /></g>,
  gpg2: <g><rect x="2" y="2" width="11" height="12" fill="#ececec" stroke="#aaa" /><path d="M9 15l5-5" stroke="#a0a0a0" strokeWidth="1.6" /></g>,
  lyrOpen: <g><rect x="3" y="3" width="8" height="10" fill="#d7d7d7" stroke="#9a9a9a" /><path d="M6 1v9" stroke="#7d8d9c" strokeWidth="2" /></g>,
  eye: <g><path d="M1 6c3-4 9-4 12 0-3 4-9 4-12 0z" fill="#cbd6e0" stroke="#8294a6" /><circle cx="7" cy="6" r="2" fill="#5f7d9a" /><path d="M10 13h5l-2.5 2.5z" fill="#222" /></g>,
  funnel: <path d="M1 2h14L9.5 9v6l-3-2V9z" fill="#52b24f" stroke="#2d7e2b" strokeWidth="0.5" />,
  expA: <g><rect x="1" y="2" width="14" height="12" fill="#d7e4f2" stroke="#5a80a8" /><path d="M1 6h14M6 2v12" stroke="#5a80a8" /><path d="M10 5v7M8 10l2 2 2-2" stroke="#d84a2a" strokeWidth="1.4" fill="none" /></g>,
  expB: <g><rect x="1" y="2" width="14" height="12" fill="#d7e4f2" stroke="#5a80a8" /><path d="M1 6h14M6 2v12" stroke="#5a80a8" /><path d="M10 12V5M8 7l2-2 2 2" stroke="#e8802a" strokeWidth="1.4" fill="none" /></g>,
  rmv: <g><rect x="2" y="2" width="10" height="11" fill="#f6f6f6" stroke="#aaa" /><rect x="9" y="10" width="6" height="4" fill="#e05050" /></g>,
  nav1: <g><path d="M2 2l12 12" stroke="#222" strokeWidth="2" /><path d="M14 2L3 14" stroke="#c68a2c" strokeWidth="2" /><path d="M1 4l4-3 2 2-4 3z" fill="#222" /></g>,
  nav2: <g><path d="M1 7l9-3 1 8-9 3z" fill="#5f8f6a" /><path d="M2 7l4-1 1 8-4 1z" fill="#b85f50" /><path d="M9 6l6-4-4 7z" fill="#8b6a3c" /></g>,
  nav3: <Abc f="#f0d030" />,
  nav4: <g><rect x="1" y="2" width="14" height="12" fill="#d7d2bf" stroke="#8e8e8e" /><rect x="1" y="2" width="14" height="3" fill="#6e8eb0" /><path d="M1 8h14M1 11h14M5.5 5v9M10 5v9" stroke="#fff" /></g>,
  nav5: <g><path d="M1 15c0-4 2-6 5-6l1 2c0 2-2 4-6 4z" fill="#d0a43c" /><path d="M6 9l8-8 1 1-7 9z" fill="#8b6a3c" /></g>,
  nav6: <path d="M2 2h12a1 1 0 0 1 1 1v7a1 1 0 0 1-1 1H8l-3 4v-4H2a1 1 0 0 1-1-1V3a1 1 0 0 1 1-1z" fill="#efe08c" stroke="#c5a93b" />,
  nav7: <g><circle cx="8" cy="7" r="5" fill="none" stroke="#c8c8c8" strokeWidth="2.5" strokeDasharray="2.2 1" /><circle cx="8" cy="7" r="2.5" fill="#4f8fd0" /><circle cx="2.5" cy="13" r="2" fill="#5a86b5" /></g>,
  nav8: <g><path d="M15 1v14L6 8z" fill="#6c9fd6" /><circle cx="3" cy="8" r="1.5" fill="#9dbce0" /><path d="M3 8h4" stroke="#9dbce0" /></g>,
  nav9: <g><rect x="1" y="3" width="14" height="10" fill="#d8cfa8" stroke="#8e8e8e" /><circle cx="8" cy="8" r="3" fill="#e2913c" /><path d="M8 8V5a3 3 0 0 1 3 3z" fill="#e9d34e" /></g>,
  nav10: <g><circle cx="8" cy="8" r="7.5" fill="#3e86cf" /><text x="6.2" y="12.5" fontSize="11" fontWeight="700" fill="#fff" fontFamily="Liberation Serif">i</text></g>,
};

function Icon({ name, size = 16 }) {
  return (
    <svg width={size} height={size} viewBox="0 0 16 16" className="block overflow-visible">
      {I[name]}
    </svg>
  );
}

const TOOLBAR1 = ['page', 'folder', 'save', 'saveas', 'newc', 'compm', '|', 'panS*', 'hand', 'panSel', 'zin', 'zout', 'z11', 'zfull', 'zsel', 'zlayer', 'zlast', 'znext', 'refresh', '|', 'ident', 'gmag', '>g', 'select', '>', 'deselect', 'expr', 'table', 'calc', 'ruler', '>', 'tip', 'annoA', 'annoB', 'tbox', '>', '|', 'cross', 'node', 'nodes'];
const TOOLBAR2 = ['gpencil', 'pencil', 'gsave', 'gblobA', 'gblobB', 'gnode', 'trash', 'scis', 'gcopy', 'gpaste', 'gmove', '|', 'chip', 'err', 'upl', 'gglobe', 'csv', '||', 'grnbox', 'grnid', 'land', 'down', 'gup', 'dblink', 'db', '|', 'abc', 'abcsel', 'gabc1', 'gabc2', 'gabc3', 'gabc4', 'gabc5', '|', 'gch1', 'gch2', 'gch3'];
const TOOLBAR3 = ['addV', 'addR', 'addEle', 'addFeat', 'addWing', 'addRnd', 'addChk', 'addG1', 'addG2', 'addG3', 'addCm', 'addVY', '>', 'comp', 'gupl', 'gbox', '|', 'py', 'grid2', 'pink', 'hill', 'lnode', 'leaf', '|', 'book', 'what', '|', 'gtri', 'undo', 'redo', 'bl1', 'bl2', 'bl3', 'bl4', 'bl5', 'bl3', 'bl4', 'bl6'];
const TOOLBAR4B = ['lib1', 'lib2', 'lib3', '/', 'addV', 'addR', 'gvv', 'gvp', 'gtool', 'gpg1', 'gpg2'];

function Sep({ wide }) {
  return (
    <div className={`${wide ? 'w-[13px]' : 'w-[7.3px]'} h-[18px] flex justify-center`}>
      <div className="h-full border-l-2 border-dotted border-[#c6c6c6]" />
    </div>
  );
}

function Tools({ items }) {
  return items.map((it, i) => {
    if (it === '|') return <Sep key={i} />;
    if (it === '||') return <Sep key={i} wide />;
    if (it === '/') return <div key={i} className="w-[1px] h-[18px] bg-[#bdbdbd]" />;
    if (it === '>') return <div key={i} className="w-[7px] flex justify-center"><div className="border-x-[3px] border-t-[3px] border-x-transparent border-t-black" /></div>;
    if (it === '>g') return <div key={i} className="w-[7px] flex justify-center"><div className="border-x-[3px] border-t-[3px] border-x-transparent border-t-[#aaa]" /></div>;
    if (it === 'hand') return <div key={i} className="w-[20.7px] flex justify-center"><Hand size={16} strokeWidth={1.3} color="#222" /></div>;
    if (it === 'panS*') {
      return (
        <div key={i} className="w-[20.7px] flex justify-center">
          <div className="w-[19px] h-[19px] flex items-center justify-center bg-[#dedede] border border-[#a8a8a8] rounded-[2px]">
            <Pointer size={15} strokeWidth={1.2} color="#333" />
          </div>
        </div>
      );
    }
    return <div key={i} className="w-[20.7px] flex justify-center"><Icon name={it} /></div>;
  });
}

function ToolRow({ children }) {
  return (
    <div className="relative h-[22.8px] flex items-center pl-[2px] pr-[2px] bg-[#f0f0f0] border-b border-[#fafafa]">
      <div className="w-[5.7px] h-[18px] border-l-2 border-dotted border-[#c6c6c6]" />
      {children}
      <span className="absolute right-[3px] text-[8px] font-bold text-[#222] leading-none">»</span>
    </div>
  );
}

function Arrow({ w = 'w-[12px]' }) {
  return (
    <div className={`${w} shrink-0 h-full flex items-center justify-center border-l border-[#c4c4c4]`}>
      <div className="border-x-[3px] border-t-[3px] border-x-transparent border-t-black" />
    </div>
  );
}

function Btn({ w, children, primary }) {
  return (
    <div className={`${w} h-[15px] flex items-center justify-center whitespace-nowrap rounded-[2px] border ${primary ? 'border-[#7a7a7a]' : 'border-[#c2c2c2]'} bg-gradient-to-b from-[#f8f8f8] to-[#e6e6e6]`}>
      {children}
    </div>
  );
}

function Combo({ w, text, h = 'h-[14px]' }) {
  return (
    <div className={`${w} ${h} flex items-center rounded-[2px] border border-[#c4c4c4] bg-gradient-to-b from-[#f6f6f6] to-[#e3e3e3]`}>
      <span className="flex-1 pl-[3px] truncate">{text}</span>
      <Arrow />
    </div>
  );
}

function Spin({ w, text, h = 'h-[13px]', gray }) {
  return (
    <div className={`${w} ${h} shrink-0 flex items-center rounded-[2px] border border-[#c4c4c4] bg-white`}>
      <span className={`flex-1 pl-[3px] text-[7.5px] tracking-normal ${gray ? 'text-[#777]' : 'text-[#333]'}`}>{text}</span>
      <div className="w-[10px] h-full flex flex-col items-center justify-around py-[2px] bg-[#e6e6e6] border-l border-[#c4c4c4]">
        <div className="border-x-[2.5px] border-b-[3px] border-x-transparent border-b-black" />
        <div className="border-x-[2.5px] border-t-[3px] border-x-transparent border-t-black" />
      </div>
    </div>
  );
}

function Check({ on, size = 'w-[8px] h-[8px]' }) {
  return (
    <div className={`${size} shrink-0 border border-[#d0d0d0] bg-white flex items-center justify-center`}>
      {on && (
        <svg viewBox="0 0 8 8" className="w-full h-full block">
          <path d="M1 1l6 6M7 1L1 7" stroke="#111" strokeWidth="2" />
        </svg>
      )}
    </div>
  );
}

const CLASSES = [
  { v: '0.000000 - 0.006…', l: '0.0000 - 0.0064', sw: 'bg-[#f7fbff]' },
  { v: '0.006358 - 0.012…', l: '0.0064 - 0.0127', sw: 'bg-[#c6dbef]' },
  { v: '0.012716 - 0.019…', l: '0.0127 - 0.0191', sw: 'bg-[#6baed6]' },
  { v: '0.019074 - 0.025…', l: '0.0191 - 0.0254', sw: 'bg-[#2171b5]' },
  { v: '0.025432 - 0.031…', l: '0.0254 - 0.0318', sw: 'bg-[#08306b]' },
];

const NAV = [
  ['一般情報', 'nav1'], ['スタイル', 'nav2'], ['ラベル', 'nav3'], ['フィールド', 'nav4'], ['レンダリング', 'nav5'],
  ['ディスプレイ', 'nav6'], ['アクション', 'nav7'], ['結合', 'nav8'], ['ダイアグラム', 'nav9'], ['メタデータ', 'nav10'],
];

function LayerProperties() {
  return (
    <div className="w-[692px] h-[428px] flex flex-col border border-[#5b9fd6]">
      <div className="h-[17px] shrink-0 flex items-center bg-white pl-[5px] pb-[1px]">
        <svg width="11" height="11" viewBox="0 0 16 16"><path d="M3 15C3 8 8 2 14 1c0 7-4 12-11 14z" fill="#7eb648" /><path d="M5 3l5 9M3 8l7-2" stroke="#e2c63c" strokeWidth="1.5" /></svg>
        <span className="ml-[2px] text-[7.5px] text-[#222] whitespace-nowrap">
          <span className="tracking-[-1.2px]">レイヤプロパティ</span>
          <span> - h22ka27227 | </span>
          <span className="tracking-[-1.2px]">スタイル</span>
        </span>
        <span className="ml-auto mr-[22px] text-[8px] text-[#333]">?</span>
        <X size={10} strokeWidth={1} color="#222" className="mr-[10px]" />
      </div>
      <div className="flex-1 flex min-h-0">
        <div className="w-[97px] shrink-0 bg-[#5a5a5a]">
          {NAV.map(([label, icon], i) => (
            <div key={label} className={`h-[22px] flex items-center pl-[4px] text-[7.5px] tracking-[-0.8px] ${i === 1 ? 'bg-[#f0f0f0] text-[#333]' : 'text-[#f0f0f0]'}`}>
              <Icon name={icon} size={16} />
              <span className="ml-[4px]">{label}</span>
            </div>
          ))}
        </div>
        <div className="flex-1 min-w-0 bg-[#f0f0f0] px-[3px] text-[7.5px] tracking-[-0.9px] text-[#333] whitespace-nowrap">
          <div className="mt-[2px] ml-[1px] w-[85px] h-[15px] flex items-center rounded-[2px] border border-[#c2c2c2] bg-gradient-to-b from-[#f8f8f8] to-[#e6e6e6]">
            <svg width="11" height="11" viewBox="0 0 16 16" className="ml-[3px]"><path d="M3 3h10v3H8v2h4v2H8v3h5v2H3v-3h2V8H3z" fill="#dc5a2e" /><path d="M10 6h3v3h-3z" fill="#e8c940" /></svg>
            <span className="ml-[3px] flex-1">階級に分けられた</span>
            <Arrow w="w-[10px]" />
          </div>
          <div className="mt-[5px] h-[15px] flex items-center">
            <span className="w-[52px]">カラム</span>
            <div className="w-[200px] h-[14px] flex items-center rounded-[2px] border border-[#c4c4c4] bg-white">
              <span className="flex-1 pl-[2px] tracking-normal">density</span>
              <Arrow />
            </div>
            <div className="ml-[3px] w-[17px] h-[15px] flex items-center justify-center rounded-[2px] border border-[#a8a8a8] bg-[#f4f4f4] text-[10px] text-[#7a3f8f] font-['Liberation_Serif',serif]">Ɛ</div>
          </div>
          <div className="mt-[4px] h-[17px] flex items-center">
            <span className="w-[52px]">シンボル</span>
            <div className="w-[411px] h-[17px] flex items-center justify-center rounded-[2px] border border-[#c8c8c8] bg-gradient-to-b from-[#ececec] to-[#e2e2e2]">
              <div className="w-[11px] h-[11px] bg-[#dcd06e] border border-[#888]" />
              <span className="ml-[2px]">変更...</span>
            </div>
            <span className="w-[33px] pl-[5px]">分類数</span>
            <Spin w="w-[88px]" text="5" />
          </div>
          <div className="mt-[4px] h-[14px] flex items-center">
            <span className="w-[52px]">色階調</span>
            <div className="w-[203px] h-[14px] flex items-center rounded-[2px] border border-[#c4c4c4] bg-[#e9e9e9]">
              <div className="ml-[2px] w-[34px] h-[10px] bg-gradient-to-r from-[#f7fbff] via-[#6baed6] to-[#08306b]" />
              <span className="ml-[2px] flex-1 tracking-normal">[source]</span>
              <Arrow />
            </div>
            <Check size="ml-[6px] w-[8px] h-[8px]" />
            <span className="ml-[3px]">反転</span>
            <span className="ml-auto mr-[3px]">モード</span>
            <Combo w="w-[88px]" text="等間隔" />
            <div className="w-[4px]" />
          </div>
          <div className="mt-[5px] h-[13px] flex items-center">
            <span className="w-[52px]">凡例フォーマット</span>
            <div className="w-[411px] h-[13px] flex items-center rounded-[2px] border border-[#c8c8c8] bg-white pl-[4px] tracking-normal">%1 - %2</div>
            <span className="w-[33px] pr-[3px] text-right">精度</span>
            <Spin w="w-[41px]" text="4" />
            <Check size="ml-[5px] w-[8px] h-[8px]" />
            <span className="ml-[3px]">トリム</span>
          </div>
          <div className="mt-[4px] h-[212px] w-[588px] border border-[#a8a8a8] bg-white">
            <div className="h-[14px] flex bg-gradient-to-b from-[#f4f4f4] to-[#dcdcdc] border-b border-[#a5a5a5]">
              <div className="w-[48px] pl-[2px] flex items-center justify-between pr-[6px] border-r border-[#b0b0b0]">シンボル<span className="text-[6px] text-[#bbb]">▽</span></div>
              <div className="w-[69px] pl-[2px] flex items-center border-r border-[#b0b0b0]">値</div>
              <div className="flex-1 pl-[2px] flex items-center">凡例</div>
            </div>
            <div>
              {CLASSES.map((c) => (
                <div key={c.l} className="h-[10.4px] flex items-center text-[7.5px] tracking-[0.15px]">
                  <div className="w-[15px] flex justify-center pl-[1px]"><Check on /></div>
                  <div className={`ml-[1px] w-[10px] h-[10.4px] ${c.sw} border border-[#9db0c4]`} />
                  <span className="ml-[24px] w-[71px]">{c.v}</span>
                  <span>{c.l}</span>
                </div>
              ))}
            </div>
          </div>
          <div className="mt-[4px] h-[15px] flex items-center">
            <Btn w="w-[48px]">分類</Btn>
            <div className="w-[7px]" />
            <Btn w="w-[49px]">クラスを追加</Btn>
            <div className="w-[6px]" />
            <Btn w="w-[49px]">削除</Btn>
            <div className="w-[6px]" />
            <Btn w="w-[49px]">全削除</Btn>
            <Check on size="ml-[7px] w-[8px] h-[8px]" />
            <span className="ml-[3px]">クラス境界の連結</span>
            <div className="ml-auto">
              <Btn w="w-[49px]">アドバンスト<span className="ml-[2px] border-x-[2px] border-t-[3px] border-x-transparent border-t-black" /></Btn>
            </div>
          </div>
          <div className="mt-[9px] h-[9px] flex items-center">
            <div className="ml-[2px] border-x-[4px] border-t-[5px] border-x-transparent border-t-[#222]" />
            <span className="ml-[4px]">レイヤレンダリング</span>
            <div className="ml-[5px] flex-1 border-t border-[#d4d4d4]" />
          </div>
          <div className="h-[42px] border-x border-b border-[#d4d4d4] rounded-b-[3px] pl-[7px] pt-[5px]">
            <div className="h-[12px] flex items-center">
              <span className="w-[145px]">レイヤ透過性</span>
              <div className="relative w-[395px] h-[3px] rounded-full border border-[#b5b5b5] bg-[#e4e4e4]">
                <div className="absolute -left-[1px] -top-[4px] w-[7px] h-[9px] rounded-b-[3px] border border-[#999] bg-[#f6f6f6]" />
              </div>
              <div className="w-[5px]" />
              <Spin w="w-[29px]" text="0" h="h-[12px]" gray />
            </div>
            <div className="mt-[5px] h-[13px] flex items-center">
              <span className="w-[145px]">レイヤ混合モード</span>
              <Combo w="w-[140px]" text="通常" h="h-[13px]" />
              <span className="w-[149px] pl-[5px]">地物混合モード</span>
              <Combo w="w-[140px]" text="通常" h="h-[13px]" />
            </div>
          </div>
          <div className="mt-[4px] h-[15px] flex items-center">
            <Btn w="w-[49px]">スタイル<span className="ml-[7px] border-x-[2px] border-t-[3px] border-x-transparent border-t-black" /></Btn>
            <div className="ml-auto flex gap-[7px]">
              <Btn w="w-[48px]" primary><span className="tracking-normal">OK</span></Btn>
              <Btn w="w-[48px]">キャンセル</Btn>
              <Btn w="w-[48px]">適用</Btn>
              <Btn w="w-[48px]">ヘルプ</Btn>
            </div>
          </div>
        </div>
      </div>
    </div>
  );
}

// label, key hint, width and letter spacing of the label
const MENU = [
  ['プロジェクト', '(J)', 'w-[48px]', 'tracking-[-1.8px]'], ['編集', '(E)', 'w-[31px]', 'tracking-[-0.5px]'], ['ビュー', '(V)', 'w-[34px]', 'tracking-[-1.5px]'], ['レイヤ', '(L)', 'w-[33px]', 'tracking-[-1.5px]'], ['設定', '(S)', 'w-[31px]', 'tracking-[-0.5px]'], ['プラグイン', '(P)', 'w-[45px]', 'tracking-[-1.8px]'],
  ['ベクタ', '(O)', 'w-[33px]', 'tracking-[-1.5px]'], ['ラスタ', '(R)', 'w-[32px]', 'tracking-[-1.5px]'], ['データベース', '(D)', 'w-[52px]', 'tracking-[-1.5px]'], ['Web', '(W)', 'w-[31px]', 'text-[7px]'], ['MMQGIS', '', 'w-[35px]', 'text-[7px]'], ['SCP', '', 'w-[21px]', 'text-[7px]'], ['ヘルプ', '(H)', 'w-[35px]', 'tracking-[-1.5px]'],
];

const LEGEND = [
  { l: '0.0000 - 0.0064', sw: 'bg-[#f7fbff]' },
  { l: '0.0064 - 0.0127', sw: 'bg-[#c6dbef]' },
  { l: '0.0127 - 0.0191', sw: 'bg-[#6baed6]' },
  { l: '0.0191 - 0.0254', sw: 'bg-[#2171b5]' },
  { l: '0.0254 - 0.0318', sw: 'bg-[#08306b]' },
];

function QgisWindow() {
  return (
    <div className="w-[750px] h-[576px] flex flex-col text-[8px] text-[#333]">
      <div className="h-[14px] shrink-0 flex items-center bg-white pl-[4px]">
        <svg width="9" height="9" viewBox="0 0 16 16"><path d="M3 15C3 8 8 2 14 1c0 7-4 12-11 14z" fill="#7eb648" /><path d="M5 3l5 9M3 8l7-2" stroke="#e2c63c" strokeWidth="1.5" /></svg>
        <span className="ml-[1px] text-[7px] text-[#222]">QGIS2.8.4-Wien</span>
        <div className="ml-auto flex items-center gap-[17px] pr-[9px]">
          <Minus size={10} strokeWidth={1} color="#333" />
          <Copy size={9} strokeWidth={1} color="#333" />
          <X size={10} strokeWidth={1} color="#333" />
        </div>
      </div>
      <div className="h-[12px] shrink-0 flex items-center bg-[#f0f0f0] pl-[5px] text-[#222]">
        {MENU.map(([label, key, w, t]) => (
          <span key={label} className={`${w} whitespace-nowrap`}>
            <span className={t}>{label}</span>
            <span className="text-[7px]">{key}</span>
          </span>
        ))}
      </div>
      <ToolRow><Tools items={TOOLBAR1} /></ToolRow>
      <ToolRow><Tools items={TOOLBAR2} /></ToolRow>
      <ToolRow><Tools items={TOOLBAR3} /></ToolRow>
      <ToolRow>
        <Tools items={['d3', 'gear', '|', 'gridO', 'strip']} />
        <div className="-ml-[3px] w-[49px] h-[10px] flex items-center bg-gradient-to-r from-[#22344c] to-[#dfe3e6] text-[7px] text-white pl-[1px] whitespace-nowrap">Input image</div>
        <div className="ml-[4px] w-[117px] h-[12px] flex items-center rounded-[2px] border border-[#c4c4c4] bg-[#e8e8e8]">
          <span className="flex-1" /><Arrow />
        </div>
        <div className="ml-[2px] w-[43px] h-[13px] flex items-center justify-center rounded-[2px] border border-[#c4c4c4] bg-[#f0f0f0]"><RotateCw size={7} color="#333" /></div>
        <div className="ml-[1px] w-[27px] h-[10px] flex items-center bg-gradient-to-r from-[#22344c] to-[#dfe3e6] text-[7px] text-white pl-[1px]">RGB=</div>
        <div className="ml-[3px] w-[40px] h-[12px] flex items-center rounded-[2px] border border-[#c4c4c4] bg-white">
          <span className="flex-1 pl-[3px]">-</span><Arrow w="w-[9px]" />
        </div>
        <div className="ml-[3px] w-[4px] h-[4px] rounded-full bg-[#222]" />
        <span className="ml-[6px] w-[21px] text-[7.5px]">Show</span>
        <span className="w-[7px] text-[8px] font-bold text-[#222] leading-none">»</span>
        <Sep />
        <Tools items={TOOLBAR4B} />
      </ToolRow>
      <div className="flex-1 min-h-0 flex bg-[#f0f0f0] pt-[1px]">
        <div className="w-[203px] shrink-0 flex flex-col pl-[1px]">
          <div className="h-[10px] flex items-center">
            <div className="flex-1 border-t-2 border-dotted border-[#cfcfcf]" />
            <span className="px-[4px] text-[7px] tracking-[-0.8px] leading-none">レイヤ</span>
            <div className="flex-1 border-t-2 border-dotted border-[#cfcfcf]" />
            <div className="ml-[2px] w-[8px] h-[8px] bg-[#c9c9c9] border border-[#666] flex items-center justify-center"><Copy size={5} color="#111" /></div>
            <div className="ml-[1px] mr-[2px] w-[8px] h-[8px] bg-[#dedede] border border-[#666] flex items-center justify-center"><X size={6} color="#111" strokeWidth={3} /></div>
          </div>
          <div className="h-[19px] flex items-center pl-[2px] gap-[7.5px]">
            {['lyrOpen', 'eye', 'funnel', 'expA', 'expB', 'rmv'].map((n) => <div key={n} className="w-[11px]"><Icon name={n} size={11} /></div>)}
          </div>
          <div className="flex-1 mr-[1px] border border-[#2f8ad8] bg-white pt-[1px]">
            <div className="h-[9px] flex items-center bg-[#0078d7] pl-[1px]">
              <div className="w-[8px] h-[8px] bg-white border border-[#888] flex items-center justify-center"><div className="w-[4px] h-[1px] bg-[#333]" /></div>
              <Check on size="ml-[4px] w-[8px] h-[8px]" />
              <svg width="10" height="8" viewBox="0 0 10 8" className="ml-[4px]"><path d="M1 1c3-1 5 1 8 0v5c-3 1-5-1-8 0z" fill="#8eb7dc" /></svg>
              <span className="ml-[3px] text-white underline">h22ka27227</span>
            </div>
            <div>
              {LEGEND.map((r) => (
                <div key={r.l} className="h-[9.5px] flex items-center pl-[17px]">
                  <div className="w-[8px] border-t border-dotted border-[#aaa]" />
                  <Check on size="w-[8px] h-[8px]" />
                  <div className={`ml-[3px] w-[9px] h-[9.5px] ${r.sw} border border-[#9db0c4]`} />
                  <span className="ml-[6px] text-[7.5px] tracking-[0.15px]">{r.l}</span>
                </div>
              ))}
            </div>
          </div>
        </div>
        <div className="ml-[3px] flex-1 min-w-0 border border-[#c4c4c4] bg-white">
          <ChoroplethMap />
        </div>
      </div>
      <div className="h-[18px] shrink-0 flex items-center bg-[#f0f0f0] pl-[158px]">
        <span className="w-[102px] text-[7px] tracking-[-1px] text-[#1a4fd0] underline whitespace-nowrap">更新されたプラグインが使用可能です</span>
        <div className="ml-[6px] w-[12px] h-[13px] shrink-0 flex items-center justify-center border border-[#999] bg-[#e8e8e8]">
          <svg width="9" height="9" viewBox="0 0 16 16"><circle cx="8" cy="8" r="7" fill="none" stroke="#333" strokeWidth="2" /><path d="M2 4l12 8M2 12l12-8" stroke="#333" strokeWidth="2" /></svg>
        </div>
        <span className="ml-[5px] w-[21px] text-[7.5px]">座標</span>
        <div className="w-[171px] h-[13px] flex items-center justify-center border border-[#c4c4c4] bg-white text-[7.5px]">-40750,-146721</div>
        <span className="ml-[5px] w-[20px] text-[7.5px]">縮尺</span>
        <div className="w-[47px] h-[13px] flex items-center border border-[#c4c4c4] bg-white">
          <span className="flex-1 pl-[2px] text-[7px] whitespace-nowrap">1:47,989</span><Arrow w="w-[10px]" />
        </div>
        <span className="ml-[5px] w-[23px] text-[7.5px]">回転:</span>
        <Spin w="w-[57px]" text="0.0" />
        <Check on size="ml-[6px] w-[8px] h-[8px]" />
        <span className="ml-[2px] w-[30px] pl-[1px] text-[7.5px] tracking-[-0.8px]">レンダ</span>
        <div className="w-[9px] h-[9px] rounded-full bg-[#a8a8a8] border-2 border-[#cfcfcf]" />
        <span className="ml-[3px] w-[50px] text-[7px] whitespace-nowrap">EPSG:2448</span>
        <div className="w-[9px] h-[8px] rounded-full bg-[#777]" />
      </div>
    </div>
  );
}

export default function App() {
  return (
    <div className="w-[1468px] h-[576px] flex bg-white overflow-hidden blur-[0.3px] font-['Liberation_Sans','Noto_Sans_CJK_JP',sans-serif]">
      <div className="w-[718px] shrink-0 pt-[75px]">
        <LayerProperties />
      </div>
      <QgisWindow />
    </div>
  );
}
